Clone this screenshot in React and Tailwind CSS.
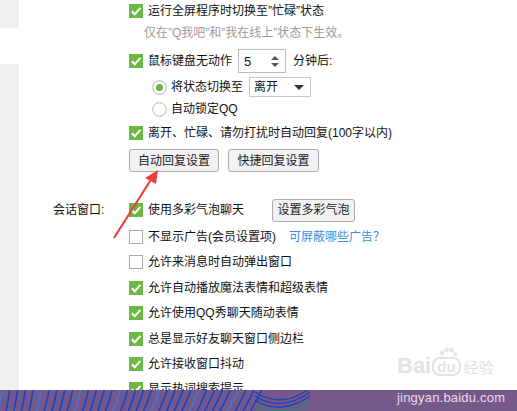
import React from "react";

const GREEN = "#6bb845";

function Check({ checked = true }) {
  if (!checked) {
    return <span className="w-[14px] h-[14px] shrink-0 border border-[#a9a9a9] bg-white" />;
  }
  return (
    <svg width="14" height="14" viewBox="0 0 14 14" className="shrink-0">
      <rect width="14" height="14" fill={GREEN} />
      <path d="M2.8 7.2 L5.8 10.2 L11.4 3.8" fill="none" stroke="white" strokeWidth="2" />
    </svg>
  );
}

function Radio({ checked }) {
  return (
    <svg width="15" height="15" viewBox="0 0 15 15" className="shrink-0">
      <circle cx="7.5" cy="7.5" r="6.8" fill="white" stroke="#b5b5b5" strokeWidth="1" />
      {checked && <circle cx="7.5" cy="7.5" r="3.6" fill={GREEN} />}
    </svg>
  );
}

function CheckRow({ checked = true, children, className = "h-[25.4px]" }) {
  return (
    <div className={`flex items-center ${className}`}>
      <Check checked={checked} />
      <span className="ml-[5px] whitespace-nowrap">{children}</span>
    </div>
  );
}

function Btn({ children, className = "" }) {
  return (
    <button className={`h-[23px] flex items-center justify-center whitespace-nowrap border border-[#adadad] rounded-[3px] bg-[#f2f2f2] text-[12px] text-[#222] leading-none ${className}`}>
      {children}
    </button>
  );
}

function BottomStrip() {
  const lines = [];
  for (let i = 0; i < 34; i++) {
    const x = i * 7.6 - 2;
    const bend = i / 34;
    lines.push(
      <path
        key={i}
        d={`M${x} 24 C ${x + 2 + bend * 4} 14, ${x + 3 + bend * 8} 6, ${x + 4 + bend * 10} -2`}
        fill="none"
        stroke={i % 5 === 0 ? "#3a7ad8" : "#1446c8"}
        strokeWidth="1.6"
      />
    );
  }
  const waves = [];
  for (let j = 0; j < 5; j++) {
    waves.push(
      <path
        key={j}
        d={`M255 ${2 + j * 4} C 270 ${12 + j * 4}, 290 ${14 + j * 3}, 310 ${-2 + j * 4}`}
        fill="none"
        stroke={j > 2 ? "#2f7f7a" : "#1a3fb8"}
        strokeWidth="1.3"
      />
    );
  }
  return (
    <div className="relative h-[21px] bg-[#76598a] overflow-hidden">
      <svg width="517" height="21" viewBox="0 0 517 21" className="absolute inset-0">
        {lines}
        {waves}
      </svg>
      <span className="absolute left-[397px] top-[1px] text-[13px] text-[#e6dcef] tracking-[0.2px]">
        jingyan.baidu.com
      </span>
    </div>
  );
}

export default function App() {
  return (
    <div className="w-[517px] h-[411px] flex flex-col bg-white text-[12px] text-[#111] font-['Liberation_Sans','Noto_Sans_CJK_SC',sans-serif] leading-none overflow-hidden">
      <div className="relative flex h-[390px]">
        {/* left strip */}
        <div className="w-[19px] flex flex-col">
          <div className="h-[28px] bg-[#f0f0f0]" />
          <div className="h-[36px] bg-white" />
          <div className="flex-1 bg-[#f0f0f0]" />
        </div>

        <div className="flex-1 flex flex-col">
          <div className="pl-[110px] flex flex-col">
            <CheckRow className="h-[22px]">运行全屏程序时切换至”忙碌”状态</CheckRow>
            <div className="h-[22px] flex items-center pl-[15px] text-[#9a9a9a] whitespace-nowrap">
              仅在”Q我吧”和”我在线上”状态下生效。
            </div>
            <div className="h-[24px] mt-[5px] flex items-center">
              <Check />
              <span className="ml-[5px]">鼠标键盘无动作</span>
              <div className="ml-[6px] w-[48px] h-[24px] border border-[#bdbdbd] flex items-center justify-between pl-[5px] pr-[6px] text-[13px]">
                <span>5</span>
                <span className="flex flex-col gap-[3px]">
                  <span className="w-0 h-0 border-x-[4px] border-x-transparent border-b-[4px] border-b-[#555]" />
                  <span className="w-0 h-0 border-x-[4px] border-x-transparent border-t-[4px] border-t-[#555]" />
                </span>
              </div>
              <span className="ml-[7px]">分钟后:</span>
            </div>
            <div className="h-[22px] mt-[3px] flex items-center pl-[23px]">
              <Radio checked />
              <span className="ml-[4px]">将状态切换至</span>
              <div className="ml-[6px] w-[62px] h-[20px] border border-[#c9c9c9] flex items-center justify-between pl-[4px] pr-[6px]">
                <span>离开</span>
                <span className="w-0 h-0 border-x-[5px] border-x-transparent border-t-[5px] border-t-[#333]" />
              </div>
            </div>
            <div className="h-[22px] flex items-center pl-[23px]">
              <Radio />
              <span className="ml-[4px]">自动锁定QQ</span>
            </div>
            <CheckRow className="h-[22px] mt-[2px]">离开、忙碌、请勿打扰时自动回复(100字以内)</CheckRow>
            <div className="flex gap-[9px] mt-[5px]">
              <Btn className="w-[90px]">自动回复设置</Btn>
              <Btn className="w-[91px]">快捷回复设置</Btn>
            </div>
          </div>

          <div className="flex mt-[26px]">
            <div className="w-[110px] h-[24px] flex items-center pl-[34px]">会话窗口:</div>
            <div className="flex flex-col">
              <div className="h-[24px] flex items-center">
                <Check />
                <span className="ml-[5px]">使用多彩气泡聊天</span>
                <Btn className="ml-[28px] w-[83px]">设置多彩气泡</Btn>
              </div>
              <div className="mt-[2.3px]">
                <div className="h-[25.4px] flex items-center whitespace-nowrap">
                  <Check checked={false} />
                  <span className="ml-[5px]">不显示广告(会员设置项)</span>
                  <span className="ml-[13px] text-[#3d8fe0]">可屏蔽哪些广告？</span>
                </div>
                <CheckRow checked={false}>允许来消息时自动弹出窗口</CheckRow>
                <CheckRow>允许自动播放魔法表情和超级表情</CheckRow>
                <CheckRow>允许使用QQ秀聊天随动表情</CheckRow>
                <CheckRow>总是显示好友聊天窗口侧边栏</CheckRow>
                <CheckRow>允许接收窗口抖动</CheckRow>
                <CheckRow>显示热词搜索提示</CheckRow>
              </div>
            </div>
          </div>
        </div>

        {/* Baidu watermark */}
        <div className="absolute left-[397px] top-[355px] flex items-end whitespace-nowrap text-[#e3e3e3] leading-none">
          <span className="text-[22px] font-bold">Bai</span>
          <span className="relative ml-[1px] mb-[1px] px-[3px] rounded-[8px] border-2 border-[#e3e3e3] text-[15px] font-bold">
            du
            <svg className="absolute left-[4px] top-[-12px]" width="20" height="12" viewBox="0 0 20 12">
              <circle cx="4" cy="6" r="2.4" fill="#e6e6e6" />
              <circle cx="8.5" cy="3" r="2.4" fill="#e6e6e6" />
              <circle cx="13.5" cy="3" r="2.4" fill="#e6e6e6" />
              <circle cx="17" cy="7" r="2.2" fill="#e6e6e6" />
            </svg>
          </span>
          <span className="ml-[3px] mb-[2px] text-[15px]">经验</span>
        </div>

        {/* red arrow */}
        <svg className="absolute left-0 top-0 pointer-events-none" width="517" height="390">
          <line x1="114" y1="238" x2="152" y2="178" stroke="#e8403a" strokeWidth="2.2" />
          <polygon points="158,170 145,178 156,184" fill="#e8403a" />
        </svg>
      </div>
      <BottomStrip />
    </div>
  );
}
